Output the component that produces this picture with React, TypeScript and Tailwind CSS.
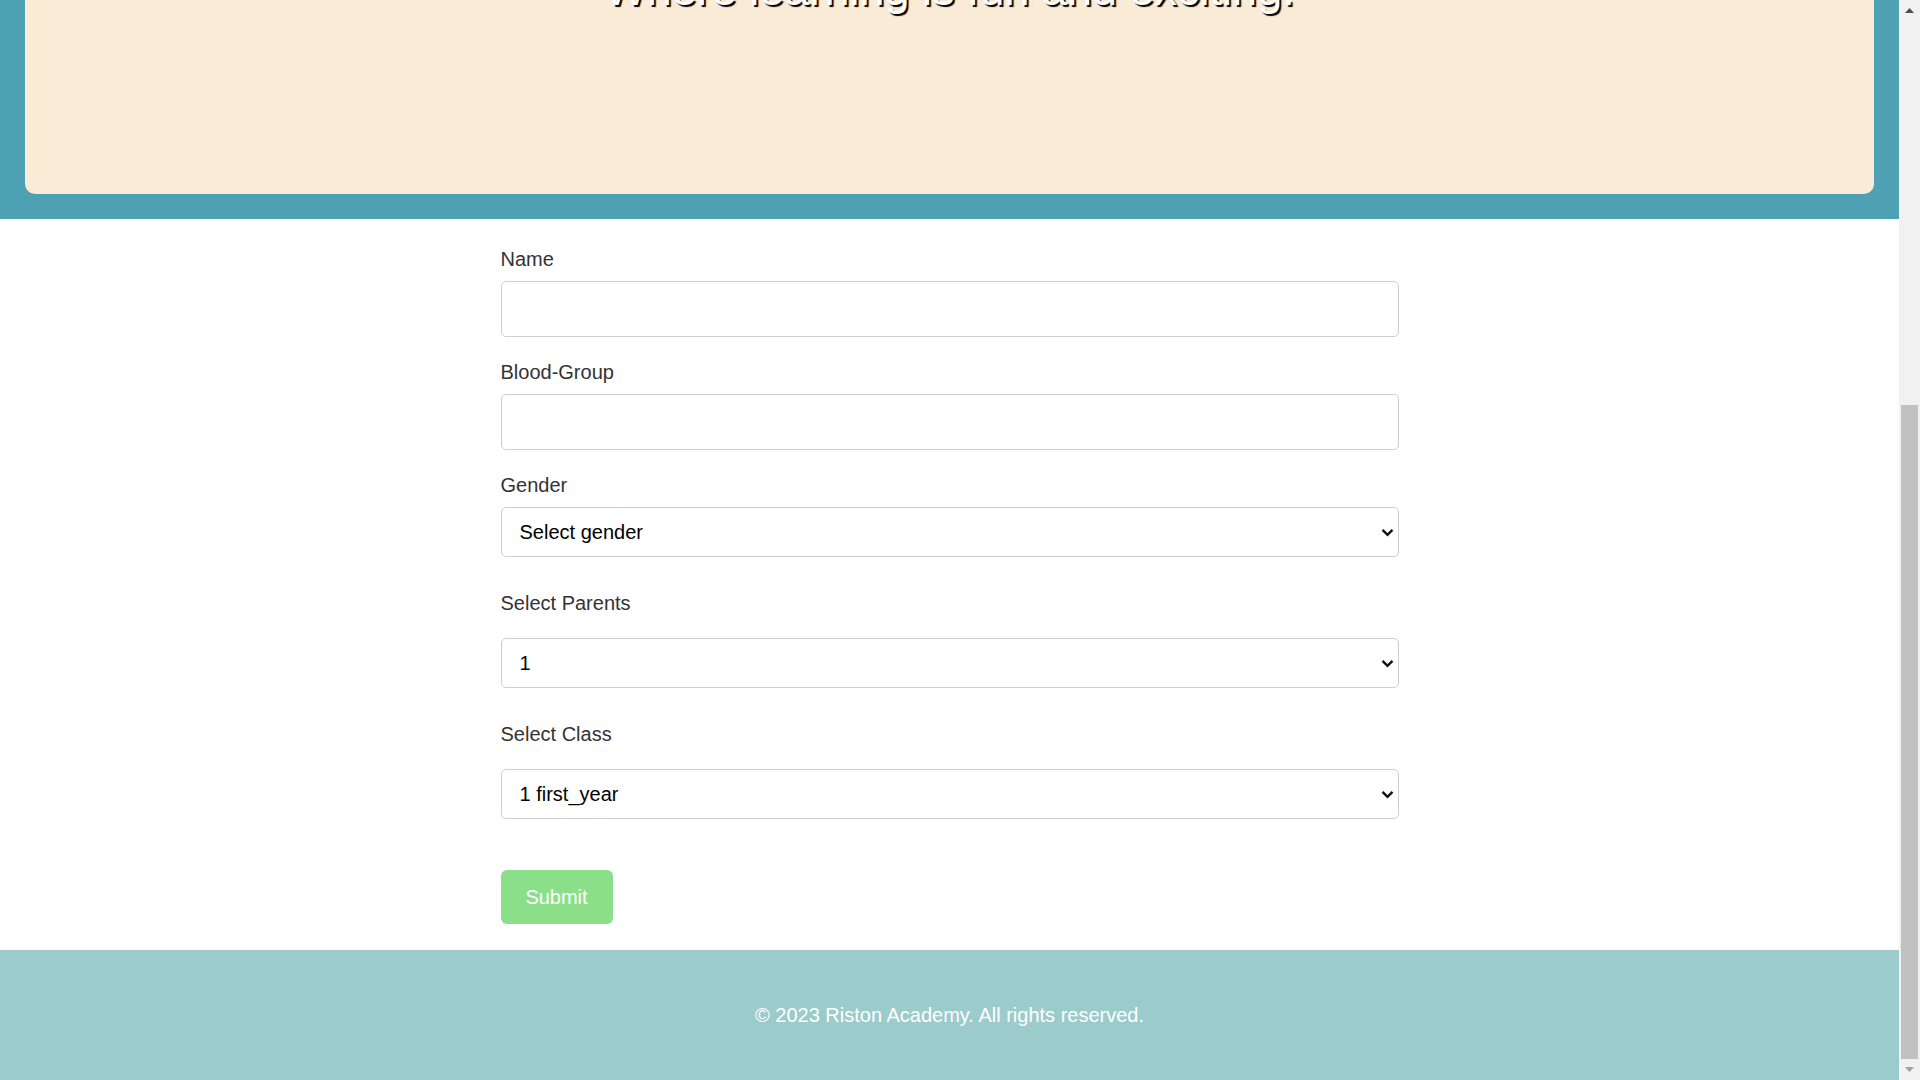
import React from "react";

const font = "font-['Liberation_Sans',Arial,sans-serif]";

function Chevron() {
  return (
    <svg width="13" height="9" viewBox="0 0 13 9" className="pointer-events-none">
      <polyline points="1.5,1.8 6.5,6.8 11.5,1.8" fill="none" stroke="#111" strokeWidth="2.4" />
    </svg>
  );
}

function SelectBox({ value }: { value: string }) {
  return (
    <div className="relative h-[50px] w-full">
      <select
        defaultValue={value}
        className={`h-full w-full appearance-none rounded-[5px] border border-[#cfcfcf] bg-white pl-[18px] pr-10 text-[20px] text-black outline-none ${font}`}
      >
        <option value={value}>{value}</option>
      </select>
      <div className="pointer-events-none absolute right-[5px] top-0 flex h-full w-[13px] items-center justify-center">
        <Chevron />
      </div>
    </div>
  );
}

export default function App() {
  return (
    <div className={`flex h-[1080px] w-[1920px] overflow-hidden bg-white ${font}`}>
      <div className="flex h-full w-[1899px] flex-col justify-end overflow-hidden">
        {/* Header (scrolled partly out of view) */}
        <header className="shrink-0 bg-[#4ea1b2] px-[25px] pb-[25px]">
          <div className="rounded-[10px] bg-[#faebd7] pb-[177px] pt-[40px]">
            <h2 className="text-center text-[45px] leading-[54px] text-white [text-shadow:2px_2px_1px_#000]">
              Where learning is fun and exciting.
            </h2>
          </div>
        </header>

        {/* Form */}
        <main className="shrink-0 bg-white">
          <form className="mx-auto w-[898px] pt-[28px] pb-[26px]" onSubmit={(e) => e.preventDefault()}>
            <label className="block text-[20px] leading-[24px] text-[#333]">Name</label>
            <input
              type="text"
              className="mt-[10px] block h-[56px] w-full rounded-[5px] border border-[#cfcfcf] bg-white px-[18px] text-[20px] outline-none"
            />

            <label className="mt-[23px] block text-[20px] leading-[24px] text-[#333]">Blood-Group</label>
            <input
              type="text"
              className="mt-[10px] block h-[56px] w-full rounded-[5px] border border-[#cfcfcf] bg-white px-[18px] text-[20px] outline-none"
            />

            <label className="mt-[23px] block text-[20px] leading-[24px] text-[#333]">Gender</label>
            <div className="mt-[10px]">
              <SelectBox value="Select gender" />
            </div>

            <label className="mt-[34px] block text-[20px] leading-[24px] text-[#333]">Select Parents</label>
            <div className="mt-[23px]">
              <SelectBox value="1" />
            </div>

            <label className="mt-[34px] block text-[20px] leading-[24px] text-[#333]">Select Class</label>
            <div className="mt-[23px]">
              <SelectBox value="1 first_year" />
            </div>

            <button
              type="submit"
              className="mt-[51px] h-[54px] w-[112px] rounded-[6px] bg-[#8bdf89] text-[20px] text-white"
            >
              Submit
            </button>
          </form>
        </main>

        {/* Footer */}
        <footer className="flex h-[130px] shrink-0 items-center justify-center bg-[#9bcbcb]">
          <p className="text-[20px] text-white">© 2023 Riston Academy. All rights reserved.</p>
        </footer>
      </div>

      {/* Scrollbar */}
      <div className="flex h-full w-[21px] flex-col bg-[#f1f1f1]">
        <div className="flex h-[21px] items-center justify-center">
          <svg width="9" height="5" viewBox="0 0 9 5">
            <polygon points="0,5 4.5,0 9,5" fill="#505050" />
          </svg>
        </div>
        <div className="flex-1" />
        <div className="mx-[2px] h-[654px] bg-[#c1c1c1]" />
        <div className="flex h-[21px] items-center justify-center">
          <svg width="9" height="5" viewBox="0 0 9 5">
            <polygon points="0,0 4.5,5 9,0" fill="#a3a3a3" />
          </svg>
        </div>
      </div>
    </div>
  );
}
